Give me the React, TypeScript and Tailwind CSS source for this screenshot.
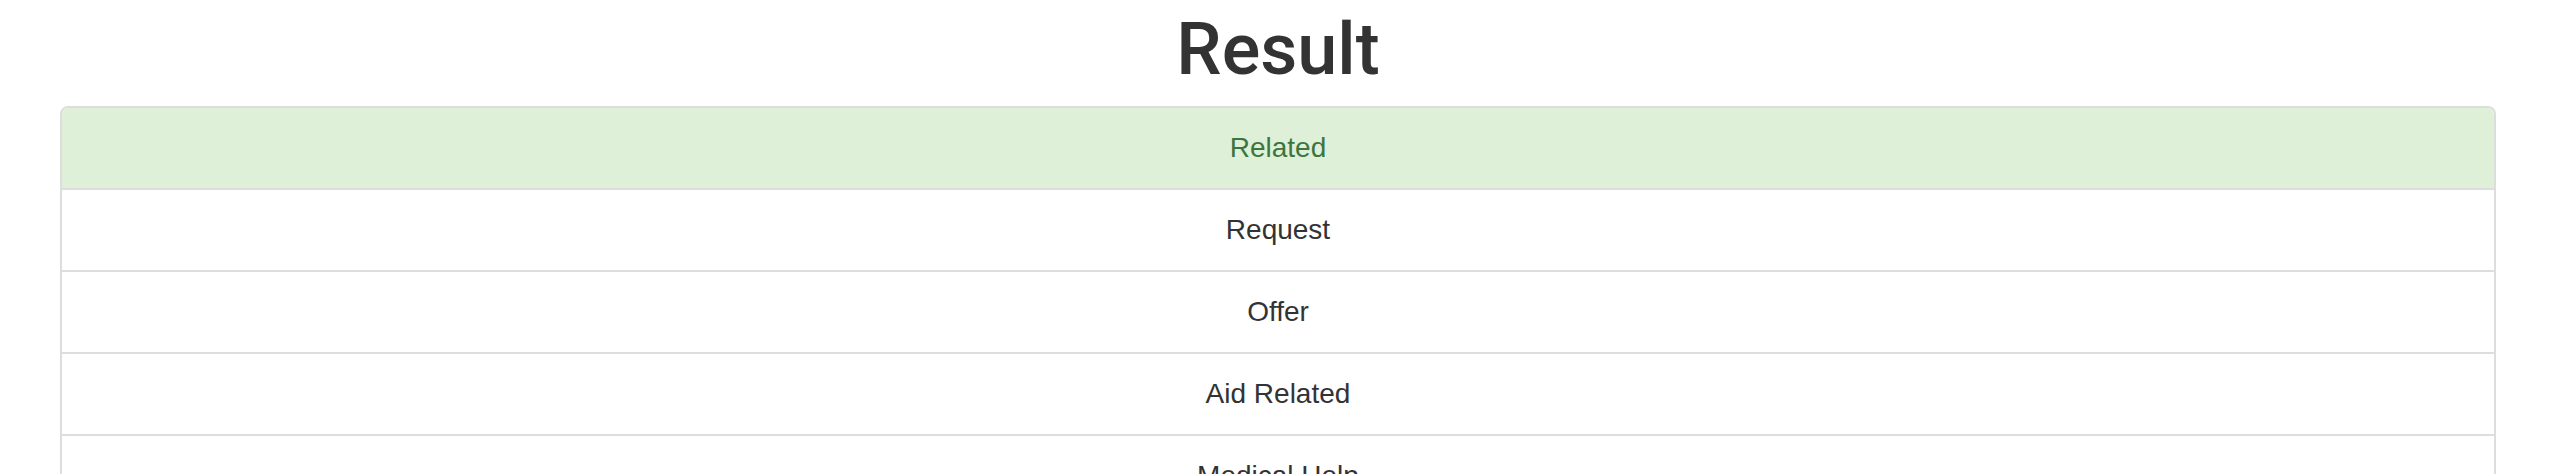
import React from "react";

const items = [
  "Related",
  "Request",
  "Offer",
  "Aid Related",
  "Medical Help",
  "Medical Products",
  "Search And Rescue",
  "Security",
  "Military",
];

export default function App() {
  return (
    <div
      className="min-h-screen bg-white text-[#333333]"
      style={{ fontFamily: '"Liberation Sans", Arial, sans-serif' }}
    >
      <div className="px-[60px] pb-10">
        <h1
          className="mt-[10px] mb-[17px] text-center text-[72px] leading-[79px] font-medium text-[#333333]"
          style={{ fontFamily: 'Roboto, "Liberation Sans", Arial, sans-serif' }}
        >
          Result
        </h1>
        <ul className="border-2 border-[#dddddd] rounded-[8px] overflow-hidden divide-y-2 divide-[#dddddd]">
          {items.map((item, i) => (
            <li
              key={item}
              className={
                i === 0
                  ? "bg-[#dff0d8] text-[#3c763d] text-center text-[28px] leading-[40px] py-[20px] px-[30px]"
                  : "bg-white text-[#333333] text-center text-[28px] leading-[40px] py-[20px] px-[30px]"
              }
            >
              {item}
            </li>
          ))}
        </ul>
      </div>
    </div>
  );
}
